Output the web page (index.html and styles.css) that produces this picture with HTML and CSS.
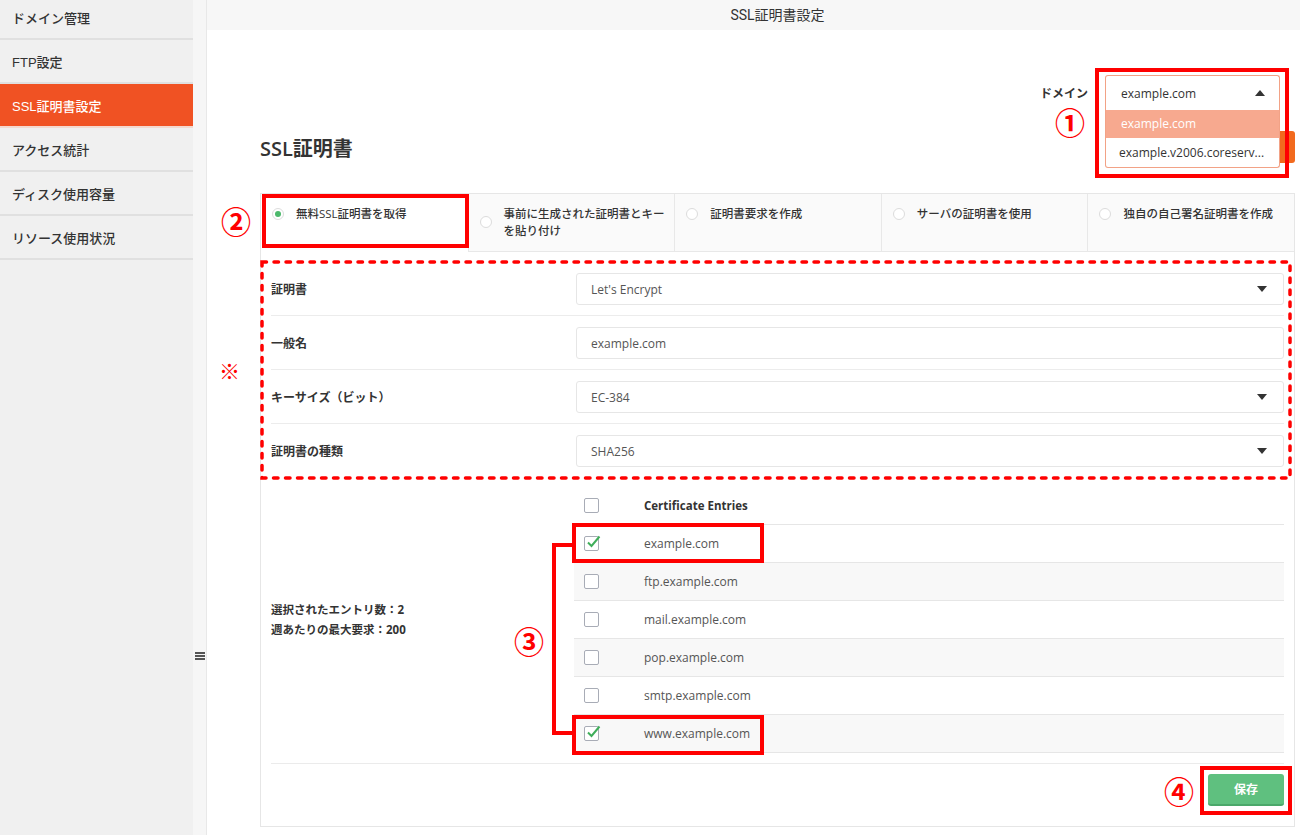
FILE: index.html
```html
<!DOCTYPE html>
<html lang="ja">
<head>
<meta charset="utf-8">
<title>SSL証明書設定</title>
<link rel="stylesheet" href="styles.css">
</head>
<body>
<div class="app">
  <aside class="sidebar">
    <ul class="nav">
      <li class="nav-item">ドメイン管理</li>
      <li class="nav-item">FTP設定</li>
      <li class="nav-item active">SSL証明書設定</li>
      <li class="nav-item">アクセス統計</li>
      <li class="nav-item">ディスク使用容量</li>
      <li class="nav-item">リソース使用状況</li>
    </ul>
  </aside>
  <div class="gutter"><span class="burger"><i></i><i></i><i></i></span></div>
  <main class="main">
    <header class="topbar">SSL証明書設定</header>
    <div class="content">
      <div class="domain-row">
        <span class="domain-label">ドメイン</span>
        <div class="domain-select">
          <div class="domain-current"><span>example.com</span><span class="caret-up"></span></div>
          <ul class="domain-list">
            <li class="opt selected">example.com</li>
            <li class="opt">example.v2006.coreserv...</li>
          </ul>
        </div>
      </div>
      <div class="title-row">
        <h1 class="title">SSL証明書</h1>
        <button class="orange-btn" type="button"></button>
      </div>
      <section class="panel">
        <div class="tabs">
          <div class="tab active"><div class="tab-inner"><span class="radio checked"></span><span class="tab-text">無料SSL証明書を取得</span></div></div>
          <div class="tab"><div class="tab-inner"><span class="radio"></span><span class="tab-text">事前に生成された証明書とキーを貼り付け</span></div></div>
          <div class="tab"><div class="tab-inner"><span class="radio"></span><span class="tab-text">証明書要求を作成</span></div></div>
          <div class="tab"><div class="tab-inner"><span class="radio"></span><span class="tab-text">サーバの証明書を使用</span></div></div>
          <div class="tab"><div class="tab-inner"><span class="radio"></span><span class="tab-text">独自の自己署名証明書を作成</span></div></div>
        </div>
        <div class="form">
          <div class="form-row">
            <span class="form-label">証明書</span>
            <div class="field"><span>Let's Encrypt</span><span class="caret-down"></span></div>
          </div>
          <div class="form-row">
            <span class="form-label">一般名</span>
            <div class="field"><span>example.com</span></div>
          </div>
          <div class="form-row">
            <span class="form-label">キーサイズ（ビット）</span>
            <div class="field"><span>EC-384</span><span class="caret-down"></span></div>
          </div>
          <div class="form-row">
            <span class="form-label">証明書の種類</span>
            <div class="field"><span>SHA256</span><span class="caret-down"></span></div>
          </div>
        </div>
        <div class="entries">
          <div class="entries-info">
            <p>選択されたエントリ数：2</p>
            <p>週あたりの最大要求：200</p>
          </div>
          <div class="entries-table">
            <div class="erow head"><span class="cell-check"><span class="checkbox"></span></span><span class="cell-name">Certificate Entries</span></div>
            <div class="erow"><span class="cell-check"><span class="checkbox checked"><svg viewBox="0 0 16 16" width="16" height="16"><path d="M3 8.5 L6.5 12 L14.5 2.5" fill="none" stroke="#3fae5a" stroke-width="2"/></svg></span></span><span class="cell-name">example.com</span></div>
            <div class="erow striped"><span class="cell-check"><span class="checkbox"></span></span><span class="cell-name">ftp.example.com</span></div>
            <div class="erow"><span class="cell-check"><span class="checkbox"></span></span><span class="cell-name">mail.example.com</span></div>
            <div class="erow striped"><span class="cell-check"><span class="checkbox"></span></span><span class="cell-name">pop.example.com</span></div>
            <div class="erow"><span class="cell-check"><span class="checkbox"></span></span><span class="cell-name">smtp.example.com</span></div>
            <div class="erow striped"><span class="cell-check"><span class="checkbox checked"><svg viewBox="0 0 16 16" width="16" height="16"><path d="M3 8.5 L6.5 12 L14.5 2.5" fill="none" stroke="#3fae5a" stroke-width="2"/></svg></span></span><span class="cell-name">www.example.com</span></div>
          </div>
        </div>
        <div class="footer"><button class="save" type="button">保存</button></div>
      </section>
    </div>
  </main>
</div>

<div class="annotations">
  <div class="mark box1"></div>
  <span class="num num1">①</span>
  <div class="mark box2"></div>
  <span class="num num2">②</span>
  <svg class="dashed" width="1034" height="222" viewBox="0 0 1034 222"><rect x="2" y="2" width="1028" height="216" fill="none" stroke="#ff0000" stroke-width="3.5" stroke-dasharray="4.5 7.5" stroke-linecap="round"/></svg>
  <span class="kome">※</span>
  <div class="mark box3a"></div>
  <div class="mark box3b"></div>
  <div class="bracket"></div>
  <span class="num num3">③</span>
  <div class="mark box4"></div>
  <span class="num num4">④</span>
</div>
</body>
</html>
```

FILE: styles.css
```css
* { box-sizing: border-box; margin: 0; padding: 0; }
html, body { width: 1300px; height: 835px; overflow: hidden; }
body {
  font-family: "Open Sans", "Noto Sans CJK JP", sans-serif;
  color: #333;
  background: #fff;
  position: relative;
}
ul { list-style: none; }

.app { display: flex; height: 835px; }

/* sidebar */
.sidebar { width: 193px; flex: none; background: #f0f0f0; }
.nav { margin-top: -4px; }
.nav-item {
  height: 44px;
  border-bottom: 2px solid #e0e0e0;
  padding-left: 12px;
  display: flex;
  align-items: center;
  font-family: "Liberation Sans", "Noto Sans CJK JP", sans-serif;
  font-size: 13px;
  font-weight: 500;
  color: #333;
}
.nav-item.active { background: #f05223; color: #fff; border-bottom-color: #f3d9cf; }

.gutter {
  width: 14px;
  flex: none;
  background: #f6f6f6;
  border-right: 1px solid #e8e8e8;
  padding-top: 652px;
  display: flex;
  justify-content: center;
}
.burger { display: flex; flex-direction: column; gap: 1px; width: 10px; height: 8px; }
.burger i { display: block; height: 2px; background: #555; }

/* main */
.main { flex: 1; min-width: 0; display: flex; flex-direction: column; }
.topbar {
  height: 30px;
  background: #f7f7f7;
  text-align: center;
  line-height: 30px;
  font-family: Roboto, "Noto Sans CJK JP", sans-serif;
  font-size: 14px;
  color: #333;
  padding-left: 48px;
}
.content { padding: 0 5px 0 53px; }

.domain-row {
  display: flex;
  justify-content: flex-end;
  align-items: center;
  gap: 17px;
  margin: 45px 15px 0 0;
}
.domain-label { font-size: 12px; font-weight: 700; color: #333; }
.domain-select { position: relative; width: 175px; }
.domain-current {
  height: 35px;
  border: 1px solid #f2a286;
  border-bottom: 0;
  border-radius: 3px 3px 0 0;
  padding: 0 14px 0 15px;
  display: flex;
  align-items: center;
  justify-content: space-between;
  font-size: 12px;
  color: #333;
  background: #fff;
}
.caret-up {
  width: 0; height: 0;
  border-left: 5px solid transparent;
  border-right: 5px solid transparent;
  border-bottom: 6px solid #333;
}
.domain-list {
  position: absolute;
  top: 35px; left: 0; right: 0;
  z-index: 5;
  background: #fff;
  border: 1px solid #f2a286;
  border-top: 0;
  border-radius: 0 0 3px 3px;
}
.opt { height: 29px; line-height: 29px; padding-left: 13px; font-size: 12px; color: #333; white-space: nowrap; }
.opt.selected { height: 28px; line-height: 28px; background: #f7a98f; color: #fff; padding-left: 15px; }

.title-row {
  display: flex;
  justify-content: space-between;
  align-items: center;
  height: 32px;
  margin-top: 21px;
}
.title { font-size: 20px; font-weight: 600; color: #333; }
.orange-btn { width: 80px; height: 32px; border: 0; border-radius: 3px; background: #f26a1e; }

/* panel */
.panel { margin-top: 30px; border: 1px solid #e6e6e6; }
.tabs { display: grid; grid-template-columns: repeat(5, 1fr); height: 58px; }
.tab {
  display: flex;
  align-items: flex-start;
  padding: 11px 6px 0 11px;
  background: #fafafa;
  border-left: 1px solid #e8e8e8;
  border-bottom: 1px solid #e8e8e8;
}
.tab.active { background: #fff; border-left: 0; border-bottom-color: transparent; }
.tab-inner { display: flex; align-items: center; gap: 12px; }
.radio {
  flex: none;
  width: 12px; height: 12px;
  border: 1px solid #dcdcdc;
  border-radius: 50%;
  background: #fff;
  position: relative;
}
.radio.checked::after {
  content: "";
  position: absolute;
  left: 2px; top: 2px;
  width: 6px; height: 6px;
  border-radius: 50%;
  background: #4cb86b;
}
.tab-text { font-size: 11.5px; line-height: 17px; font-weight: 500; color: #333; }

.form { padding: 10px 10px 0; }
.form-row {
  display: flex;
  align-items: center;
  height: 54px;
  padding: 11px 0 10px;
  border-bottom: 1px solid #ececec;
}
.form-row:last-child { height: 53px; border-bottom: 0; }
.form-label { width: 305px; flex: none; font-size: 12px; font-weight: 700; color: #333; }
.field {
  flex: 1;
  height: 32px;
  border: 1px solid #e6e6e6;
  border-radius: 3px;
  padding: 0 16px 0 14px;
  display: flex;
  align-items: center;
  justify-content: space-between;
  font-size: 12px;
  color: #555;
}
.caret-down {
  width: 0; height: 0;
  border-left: 5.5px solid transparent;
  border-right: 5.5px solid transparent;
  border-top: 6px solid #333;
}

.entries { display: flex; padding: 10px 10px 0; }
.entries-info {
  width: 303px;
  flex: none;
  display: flex;
  flex-direction: column;
  justify-content: center;
  font-size: 11.5px;
  font-weight: 700;
  line-height: 20px;
  color: #333;
}
.entries-table { flex: 1; }
.erow {
  display: flex;
  align-items: center;
  height: 38px;
  border-bottom: 1px solid #e6e6e6;
  font-size: 12px;
  color: #555;
}
.erow.head { height: 38px; font-weight: 700; color: #333; font-size: 11.5px; }
.erow.striped { background: #f8f8f8; }
.cell-check { width: 70px; flex: none; padding-left: 10px; display: flex; }
.checkbox {
  width: 15px; height: 15px;
  border: 1px solid #a8acb6;
  border-radius: 2px;
  background: #fff;
  position: relative;
}
.checkbox svg { position: absolute; left: 0; top: -3px; }

.footer {
  margin: 10px 10px 0;
  border-top: 1px solid #ebebeb;
  padding: 10px 0 20px;
  display: flex;
  justify-content: flex-end;
}
.save {
  width: 76px; height: 32px;
  border: 0;
  border-bottom: 2px solid #4ba86a;
  border-radius: 3px;
  background: #5fc07f;
  color: #fff;
  font-family: "Open Sans", "Noto Sans CJK JP", sans-serif;
  font-size: 12px;
  font-weight: 700;
}

/* annotations (overlays) */
.annotations { position: absolute; left: 0; top: 0; width: 1300px; height: 835px; pointer-events: none; z-index: 10; }
.mark { position: absolute; border: 4px solid #ff0000; }
.box1 { left: 1095px; top: 68px; width: 194px; height: 110px; }
.box2 { left: 262px; top: 194px; width: 207px; height: 54px; }
.box3a { left: 572px; top: 523px; width: 192px; height: 40px; }
.box3b { left: 572px; top: 715px; width: 192px; height: 40px; }
.box4 { left: 1200px; top: 766px; width: 92px; height: 49px; }
.bracket {
  position: absolute;
  left: 552px; top: 543px;
  width: 22px; height: 192px;
  border: 4px solid #ff0000;
  border-right: 0;
}
.dashed { position: absolute; left: 260px; top: 260px; }
.num {
  position: absolute;
  font-family: "Noto Sans CJK JP", sans-serif;
  font-size: 30px;
  font-weight: 700;
  line-height: 30px;
  color: #ff0000;
}
.num1 { left: 1055px; top: 106px; }
.num2 { left: 221px; top: 205px; }
.num3 { left: 514px; top: 625px; }
.num4 { left: 1164px; top: 775px; }
.kome {
  position: absolute;
  left: 219px; top: 358px;
  font-family: "Noto Sans CJK JP", sans-serif;
  font-size: 21px;
  line-height: 24px;
  color: #ff0000;
}
```
